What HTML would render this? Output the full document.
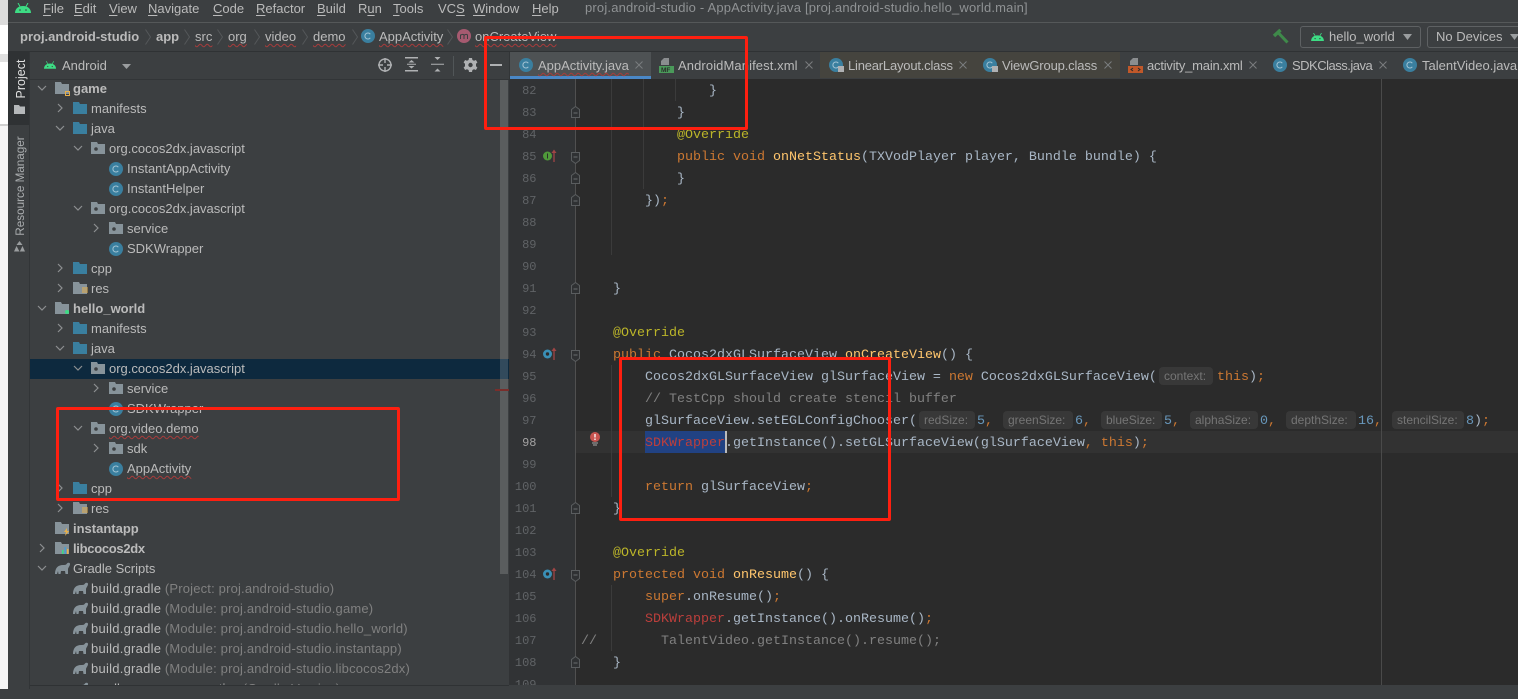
<!DOCTYPE html>
<html><head><meta charset="utf-8"><title>proj.android-studio</title>
<style>
html,body{margin:0;padding:0;width:1518px;height:689px;overflow:hidden;background:#3c3f41}
*{box-sizing:border-box}
.a{position:absolute}
.t{position:absolute;white-space:pre;font:13px/20px "Liberation Sans",sans-serif;color:#bbbbbb;margin-top:1px}
.b{font-weight:bold}
.g{color:#808080;letter-spacing:.18px}
.bg{letter-spacing:.25px}
.s{text-decoration:underline wavy #a83c3c 1px;text-underline-offset:2px;text-decoration-skip-ink:none}
.m .t{margin-top:0}
.m u{text-decoration:underline;text-underline-offset:2px}
.c{position:absolute;white-space:pre;font:13.33px/22px "Liberation Mono",monospace;color:#a9b7c6;margin-top:2px}
.k{color:#cc7832}.y{color:#ffc66d}.n{color:#6897bb}.an{color:#bbb529}.cm{color:#808080}.e{color:#bc3f3c}
.ln{position:absolute;left:509px;width:27.5px;text-align:right;font:12px/22px "Liberation Mono",monospace;color:#606366;margin-top:1px}
.i{position:absolute;height:18px;background:#383838;border-radius:4px;color:#757575;font:12px/18px "Liberation Sans",sans-serif;padding-left:5px;white-space:pre}
svg.u{position:absolute;overflow:visible}
.r{position:absolute;border:3px solid #fe1f10;border-radius:2px;background:transparent}
.tab{position:absolute;top:52px;height:26px}
</style></head><body>
<svg width="0" height="0" style="position:absolute">
<defs>
<symbol id="and" viewBox="0 0 16 10"><path d="M0 10C0 6 3 3 8 3s8 3 8 7z" fill="#3ddc84"/><path d="M3 0l2 3.500M13 0l-2 3.500" stroke="#3ddc84" stroke-width="1"/><circle cx="5" cy="7" r=".8" fill="#3c3f41"/><circle cx="11" cy="7" r=".8" fill="#3c3f41"/></symbol>
<symbol id="fo" viewBox="0 0 14 12"><path d="M0 0h6l1 2h7v10H0z" fill="#3a7f9f"/></symbol>
<symbol id="pk" viewBox="0 0 14 12"><path d="M0 0h6l1 2h7v10H0z" fill="#87939a"/><circle cx="5" cy="7" r="1.800" fill="#3c3f41"/></symbol>
<symbol id="cl" viewBox="0 0 14 14"><circle cx="7" cy="7" r="7" fill="#3a7f9f"/><path d="M9.300 5.200A3 3 0 1 0 9.300 8.800" fill="none" stroke="#a3c4d4" stroke-width="1"/></symbol>
<symbol id="gr" viewBox="0 0 15 12"><path d="M0 12C0 6 3 3 8 3c2 0 3 0 4-1.500 1-1 3-1 3 .5 0 2-1.500 3-2 5v5h-2.500l-.5-3H6l-.5 3H3.500l-.5-3-1 3z" fill="#87939a"/></symbol>
<symbol id="dn" viewBox="0 0 10 6"><path d="M1 1l4 4 4-4" fill="none" stroke="#8c8f91" stroke-width="1.200"/></symbol>
<symbol id="rt" viewBox="0 0 6 10"><path d="M1 1l4 4-4 4" fill="none" stroke="#8c8f91" stroke-width="1.200"/></symbol>
<symbol id="fu" viewBox="0 0 9 12"><path d="M.5 11.500V3.500L4.500 .5l4 3v8z" fill="#2f3133" stroke="#5a5d5f"/><path d="M2.500 7h4" stroke="#6a6d6f"/></symbol>
<symbol id="fd" viewBox="0 0 9 12"><path d="M.5 .5h8v8l-4 3-4-3z" fill="#2f3133" stroke="#5a5d5f"/><path d="M2.500 5h4" stroke="#6a6d6f"/></symbol>
<symbol id="ch" viewBox="0 0 6 16"><path d="M.5 .5l5 7.500-5 7.500" fill="none" stroke="#55585a"/></symbol>
</defs></svg>

<!-- window left edge -->
<div class="a" style="left:0;top:0;width:8px;height:689px;background:#f5f5f5"></div>
<div class="a" style="left:0;top:0;width:8px;height:25px;background:#dcdcdc"></div>
<div class="a" style="left:0;top:25px;width:8px;height:29px;background:#fff"></div>
<div class="a" style="left:0;top:54px;width:8px;height:8px;background:#e0e0e0"></div>
<div class="a" style="left:0;top:62px;width:8px;height:62px;background:#fff"></div>
<div class="a" style="left:0;top:124px;width:8px;height:2px;background:#d0d0d0"></div>

<!-- bars -->
<div class="a" style="left:8px;top:0;width:1510px;height:23px;background:#3c3f41;border-bottom:1px solid #555859"></div>
<div class="a" style="left:8px;top:23px;width:1510px;height:29px;background:#3c3f41;border-bottom:1px solid #2f3234"></div>

<!-- menu -->
<svg class="u" style="left:15px;top:3px" width="16" height="10"><use href="#and"/></svg>
<div class="m">
<div class="t" style="left:43px;top:-1px"><u>F</u>ile</div>
<div class="t" style="left:74px;top:-1px"><u>E</u>dit</div>
<div class="t" style="left:109px;top:-1px"><u>V</u>iew</div>
<div class="t" style="left:148px;top:-1px"><u>N</u>avigate</div>
<div class="t" style="left:213px;top:-1px"><u>C</u>ode</div>
<div class="t" style="left:256px;top:-1px"><u>R</u>efactor</div>
<div class="t" style="left:317px;top:-1px"><u>B</u>uild</div>
<div class="t" style="left:358px;top:-1px">R<u>u</u>n</div>
<div class="t" style="left:393px;top:-1px"><u>T</u>ools</div>
<div class="t" style="left:438px;top:-1px">VC<u>S</u></div>
<div class="t" style="left:473px;top:-1px"><u>W</u>indow</div>
<div class="t" style="left:532px;top:-1px"><u>H</u>elp</div>
<div class="t" style="left:585px;top:-2px;color:#8f9294;letter-spacing:.18px">proj.android-studio - AppActivity.java [proj.android-studio.hello_world.main]</div>
</div>

<!-- nav bar -->
<div class="t b" style="left:20px;top:26px">proj.android-studio</div>
<svg class="u" style="left:145px;top:29px" width="6" height="16"><use href="#ch"/></svg>
<div class="t b" style="left:156px;top:26px">app</div>
<svg class="u" style="left:184px;top:29px" width="6" height="16"><use href="#ch"/></svg>
<div class="t s" style="left:195px;top:26px">src</div>
<svg class="u" style="left:217px;top:29px" width="6" height="16"><use href="#ch"/></svg>
<div class="t s" style="left:228px;top:26px">org</div>
<svg class="u" style="left:254px;top:29px" width="6" height="16"><use href="#ch"/></svg>
<div class="t s" style="left:265px;top:26px">video</div>
<svg class="u" style="left:302px;top:29px" width="6" height="16"><use href="#ch"/></svg>
<div class="t s" style="left:313px;top:26px">demo</div>
<svg class="u" style="left:352px;top:29px" width="6" height="16"><use href="#ch"/></svg>
<svg class="u" style="left:361px;top:29px" width="14" height="14"><use href="#cl"/></svg>
<div class="t s" style="left:379px;top:26px">AppActivity</div>
<svg class="u" style="left:447px;top:29px" width="6" height="16"><use href="#ch"/></svg>
<svg class="u" style="left:457px;top:29px" width="14" height="14"><circle cx="7" cy="7" r="7" fill="#a65a70"/><path d="M3.500 10V5.500M3.500 6.500c1-1.500 3.500-1.500 3.500 0V10M7 6.500c1-1.500 3.500-1.500 3.500 0V10" fill="none" stroke="#3c3f41" stroke-width="1"/></svg>
<div class="t s" style="left:475px;top:26px">onCreateView</div>

<!-- run toolbar -->
<svg class="u" style="left:1273px;top:29px" width="16" height="16" fill="none" stroke="#3f8a4a"><path d="M1 7L7.500 1" stroke-width="3.500"/><path d="M5 3.500L14.500 13.500" stroke-width="3"/></svg>
<div class="a" style="left:1300px;top:26px;width:121px;height:22px;border:1px solid #5e6163;border-radius:3px"></div>
<svg class="u" style="left:1311px;top:33px" width="13" height="8"><use href="#and"/></svg>
<div class="t" style="left:1329px;top:26px">hello_world</div>
<svg class="u" style="left:1403px;top:34px" width="9" height="6"><path d="M0 0h9L4.500 6z" fill="#9a9d9f"/></svg>
<div class="a" style="left:1427px;top:26px;width:100px;height:22px;border:1px solid #5e6163;border-radius:3px"></div>
<div class="t" style="left:1436px;top:26px">No Devices</div>
<svg class="u" style="left:1510px;top:34px" width="9" height="6"><path d="M0 0h9L4.500 6z" fill="#9a9d9f"/></svg>

<!-- left strip -->
<div class="a" style="left:8px;top:52px;width:22px;height:637px;background:#3c3f41;border-right:1px solid #323537"></div>
<div class="a" style="left:8px;top:52px;width:21px;height:73px;background:#2f3234"></div>
<div class="t" style="left:21px;top:79px;margin:0;transform:translate(-50%,-50%) rotate(-90deg);line-height:14px;font-size:12.5px;color:#e0e0e0">Project</div>
<svg class="u" style="left:14px;top:105px" width="11" height="9"><path d="M0 0h5l1 1.500h5V9H0z" fill="#b5b8ba"/></svg>
<div class="t" style="left:21px;top:186px;margin:0;transform:translate(-50%,-50%) rotate(-90deg);line-height:14px;font-size:11.7px;color:#a9acae">Resource Manager</div>
<svg class="u" style="left:14px;top:241px" width="11" height="11"><path d="M5.500 0l3 4h-6zM2.500 5l3 5.500H0zM8.500 5l2.500 5.500H5.800z" fill="#9a9d9f"/></svg>

<!-- project panel header -->
<div class="a" style="left:30px;top:52px;width:479px;height:28px;background:#3c3f41;border-bottom:1px solid #323537"></div>
<svg class="u" style="left:44px;top:61px" width="12" height="8"><use href="#and"/></svg>
<div class="t" style="left:62px;top:55px">Android</div>
<svg class="u" style="left:122px;top:64px" width="9" height="5"><path d="M0 0h9L4.500 5z" fill="#9a9d9f"/></svg>
<svg class="u" style="left:378px;top:58px" width="14" height="14" fill="none" stroke="#afb1b3" stroke-width="1.400"><circle cx="7" cy="7" r="6"/><path d="M7 0v5M7 9v5M0 7h5M9 7h5"/></svg>
<svg class="u" style="left:405px;top:57px" width="13" height="15" fill="#afb1b3"><path d="M0 0h13v1.500H0zM0 13h13v1.500H0zM3.500 5.500L6.500 3l3 2.500zM3.500 9l3 2.500L9.500 9zM2 6.800h9v1H2z"/></svg>
<svg class="u" style="left:431px;top:57px" width="13" height="15" fill="#afb1b3"><path d="M3.500 0l3 3 3-3zM3.500 14.500l3-3 3 3zM0 6.800h13v1H0z"/></svg>
<div class="a" style="left:453px;top:56px;width:1px;height:20px;background:#515658"></div>
<svg class="u" style="left:464px;top:58px" width="13" height="14"><path d="M5 0h3l.4 2 1.600.8 1.900-.8 1.500 2.500L12 5.800v2.400l1.400 1.300-1.500 2.500-1.900-.8-1.600.8L8 14H5l-.4-2-1.600-.8-1.900.8L-.4 9.500 1 8.200V5.800L-.4 4.500 1.100 2l1.900.8L4.600 2z" fill="#afb1b3"/><circle cx="6.500" cy="7" r="2.200" fill="#3c3f41"/></svg>
<div class="a" style="left:490px;top:64px;width:12px;height:2px;background:#afb1b3"></div>

<!-- tree -->
<div class="a" style="left:0;top:0;width:1518px;height:689px;clip-path:inset(80px 1009px 4px 30px)">
<div class="a" style="left:30px;top:359px;width:479px;height:20px;background:#0d293e"></div>
<div class="a" style="left:500px;top:80px;width:8px;height:494px;background:rgba(255,255,255,.155)"></div>
<div class="a" style="left:495px;top:389px;width:14px;height:2px;background:#7a2e2b"></div>

<svg class="u" style="left:37px;top:85px" width="10" height="6"><use href="#dn"/></svg>
<svg class="u" style="left:55px;top:82px" width="14" height="12"><path d="M0 0h6l1 2h7v10H0z" fill="#87939a"/></svg>
<div class="a" style="left:65px;top:91px;width:5px;height:5px;border:1px solid #e8b04a"></div>
<div class="t b" style="left:73px;top:78px">game</div>

<svg class="u" style="left:57px;top:103px" width="6" height="10"><use href="#rt"/></svg>
<svg class="u" style="left:73px;top:102px" width="14" height="12"><use href="#fo"/></svg>
<div class="t" style="left:91px;top:98px">manifests</div>

<svg class="u" style="left:55px;top:125px" width="10" height="6"><use href="#dn"/></svg>
<svg class="u" style="left:73px;top:122px" width="14" height="12"><use href="#fo"/></svg>
<div class="t" style="left:91px;top:118px">java</div>

<svg class="u" style="left:73px;top:145px" width="10" height="6"><use href="#dn"/></svg>
<svg class="u" style="left:91px;top:142px" width="14" height="12"><use href="#pk"/></svg>
<div class="t" style="left:109px;top:138px">org.cocos2dx.javascript</div>

<svg class="u" style="left:109px;top:162px" width="14" height="14"><use href="#cl"/></svg>
<div class="t" style="left:127px;top:158px">InstantAppActivity</div>
<svg class="u" style="left:109px;top:182px" width="14" height="14"><use href="#cl"/></svg>
<div class="t" style="left:127px;top:178px">InstantHelper</div>

<svg class="u" style="left:73px;top:205px" width="10" height="6"><use href="#dn"/></svg>
<svg class="u" style="left:91px;top:202px" width="14" height="12"><use href="#pk"/></svg>
<div class="t" style="left:109px;top:198px">org.cocos2dx.javascript</div>

<svg class="u" style="left:93px;top:223px" width="6" height="10"><use href="#rt"/></svg>
<svg class="u" style="left:109px;top:222px" width="14" height="12"><use href="#pk"/></svg>
<div class="t" style="left:127px;top:218px">service</div>
<svg class="u" style="left:109px;top:242px" width="14" height="14"><use href="#cl"/></svg>
<div class="t" style="left:127px;top:238px">SDKWrapper</div>

<svg class="u" style="left:57px;top:263px" width="6" height="10"><use href="#rt"/></svg>
<svg class="u" style="left:73px;top:262px" width="14" height="12"><use href="#fo"/></svg>
<div class="t" style="left:91px;top:258px">cpp</div>
<svg class="u" style="left:57px;top:283px" width="6" height="10"><use href="#rt"/></svg>
<svg class="u" style="left:73px;top:282px" width="14" height="12"><path d="M0 0h6l1 2h7v10H0z" fill="#87939a"/><path d="M9 6h6M9 8h6M9 10h6" stroke="#e8b04a"/></svg>
<div class="t" style="left:91px;top:278px">res</div>

<svg class="u" style="left:37px;top:305px" width="10" height="6"><use href="#dn"/></svg>
<svg class="u" style="left:55px;top:302px" width="14" height="12"><path d="M0 0h6l1 2h7v10H0z" fill="#87939a"/><circle cx="12" cy="10" r="2" fill="#3ddc84"/></svg>
<div class="t b" style="left:73px;top:298px">hello_world</div>

<svg class="u" style="left:57px;top:323px" width="6" height="10"><use href="#rt"/></svg>
<svg class="u" style="left:73px;top:322px" width="14" height="12"><use href="#fo"/></svg>
<div class="t" style="left:91px;top:318px">manifests</div>
<svg class="u" style="left:55px;top:345px" width="10" height="6"><use href="#dn"/></svg>
<svg class="u" style="left:73px;top:342px" width="14" height="12"><use href="#fo"/></svg>
<div class="t" style="left:91px;top:338px">java</div>

<svg class="u" style="left:73px;top:365px" width="10" height="6"><use href="#dn"/></svg>
<svg class="u" style="left:91px;top:362px" width="14" height="12"><use href="#pk"/></svg>
<div class="t" style="left:109px;top:358px">org.cocos2dx.javascript</div>
<svg class="u" style="left:93px;top:383px" width="6" height="10"><use href="#rt"/></svg>
<svg class="u" style="left:109px;top:382px" width="14" height="12"><use href="#pk"/></svg>
<div class="t" style="left:127px;top:378px">service</div>
<svg class="u" style="left:109px;top:402px" width="14" height="14"><use href="#cl"/></svg>
<div class="t" style="left:127px;top:398px">SDKWrapper</div>

<svg class="u" style="left:73px;top:425px" width="10" height="6"><use href="#dn"/></svg>
<svg class="u" style="left:91px;top:422px" width="14" height="12"><use href="#pk"/></svg>
<div class="t s" style="left:109px;top:418px">org.video.demo</div>
<svg class="u" style="left:93px;top:443px" width="6" height="10"><use href="#rt"/></svg>
<svg class="u" style="left:109px;top:442px" width="14" height="12"><use href="#pk"/></svg>
<div class="t" style="left:127px;top:438px">sdk</div>
<svg class="u" style="left:109px;top:462px" width="14" height="14"><use href="#cl"/></svg>
<div class="t s" style="left:127px;top:458px">AppActivity</div>

<svg class="u" style="left:57px;top:483px" width="6" height="10"><use href="#rt"/></svg>
<svg class="u" style="left:73px;top:482px" width="14" height="12"><use href="#fo"/></svg>
<div class="t" style="left:91px;top:478px">cpp</div>
<svg class="u" style="left:57px;top:503px" width="6" height="10"><use href="#rt"/></svg>
<svg class="u" style="left:73px;top:502px" width="14" height="12"><path d="M0 0h6l1 2h7v10H0z" fill="#87939a"/><path d="M9 6h6M9 8h6M9 10h6" stroke="#e8b04a"/></svg>
<div class="t" style="left:91px;top:498px">res</div>

<svg class="u" style="left:55px;top:522px" width="14" height="12"><path d="M0 0h6l1 2h7v10H0z" fill="#87939a"/><path d="M12 6l-3 4h2l-1 4 4-5h-2z" fill="#e8b04a"/></svg>
<div class="t b" style="left:73px;top:518px">instantapp</div>
<svg class="u" style="left:39px;top:543px" width="6" height="10"><use href="#rt"/></svg>
<svg class="u" style="left:55px;top:542px" width="14" height="12"><path d="M0 0h6l1 2h7v10H0z" fill="#87939a"/><path d="M7 12V8h1.500v4z" fill="#3ddc84"/><path d="M9.500 12V5H11v7z" fill="#4a9fd0"/><path d="M12 12V7h1.500v5z" fill="#e8b04a"/></svg>
<div class="t b" style="left:73px;top:538px;letter-spacing:-.3px">libcocos2dx</div>

<svg class="u" style="left:37px;top:565px" width="10" height="6"><use href="#dn"/></svg>
<svg class="u" style="left:55px;top:562px" width="15" height="12"><use href="#gr"/></svg>
<div class="t" style="left:73px;top:558px">Gradle Scripts</div>
<svg class="u" style="left:73px;top:582px" width="15" height="12"><use href="#gr"/></svg>
<div class="t" style="left:91px;top:578px"><span class="bg">build.gradle</span> <span class="g">(Project: proj.android-studio)</span></div>
<svg class="u" style="left:73px;top:602px" width="15" height="12"><use href="#gr"/></svg>
<div class="t" style="left:91px;top:598px"><span class="bg">build.gradle</span> <span class="g">(Module: proj.android-studio.game)</span></div>
<svg class="u" style="left:73px;top:622px" width="15" height="12"><use href="#gr"/></svg>
<div class="t" style="left:91px;top:618px"><span class="bg">build.gradle</span> <span class="g">(Module: proj.android-studio.hello_world)</span></div>
<svg class="u" style="left:73px;top:642px" width="15" height="12"><use href="#gr"/></svg>
<div class="t" style="left:91px;top:638px"><span class="bg">build.gradle</span> <span class="g">(Module: proj.android-studio.instantapp)</span></div>
<svg class="u" style="left:73px;top:662px" width="15" height="12"><use href="#gr"/></svg>
<div class="t" style="left:91px;top:658px"><span class="bg">build.gradle</span> <span class="g">(Module: proj.android-studio.libcocos2dx)</span></div>
<svg class="u" style="left:73px;top:682px" width="15" height="12"><use href="#gr"/></svg>
<div class="t" style="left:91px;top:678px">gradle-wrapper.properties <span class="g">(Gradle Version)</span></div>
</div>
<div class="a" style="left:30px;top:685px;width:479px;height:1px;background:#2f3234"></div>
<div class="a" style="left:30px;top:686px;width:1488px;height:3px;background:#3c3f41"></div>

<!-- tabs -->
<div class="a" style="left:509px;top:52px;width:1009px;height:27px;background:#3c3f41;border-left:1px solid #323537"></div>
<div class="tab" style="left:510px;width:141px;background:#4e5254"></div>
<div class="a" style="left:510px;top:76px;width:141px;height:3px;background:#4a88c7"></div>
<div class="tab" style="left:820px;width:300px;height:26px;background:#45443e"></div>

<svg class="u" style="left:519px;top:58px" width="14" height="14"><use href="#cl"/></svg>
<div class="t s" style="left:538px;top:55px">AppActivity.java</div>
<svg class="u" style="left:635px;top:61px" width="9" height="9" stroke="#7a7d7f" fill="none"><path d="M.5 .5l7 7M7.500 .5l-7 7"/></svg>

<svg class="u" style="left:659px;top:58px" width="15" height="15"><path d="M5 0h5v7H2V3z" fill="#8a8d8f"/><rect y="8" width="15" height="7" fill="#4a9a5a"/><text x="2" y="14" font-family="Liberation Sans" font-size="6.500" font-weight="bold" fill="#2b2b2b">MF</text></svg>
<div class="t" style="left:678px;top:55px;letter-spacing:.1px">AndroidManifest.xml</div>
<svg class="u" style="left:805px;top:61px" width="9" height="9" stroke="#7a7d7f" fill="none"><path d="M.5 .5l7 7M7.500 .5l-7 7"/></svg>

<svg class="u" style="left:829px;top:58px" width="14" height="14"><use href="#cl"/><rect x="9" y="8" width="6" height="6" fill="#afb1b3"/></svg>
<div class="t" style="left:848px;top:55px;letter-spacing:-.2px">LinearLayout.class</div>
<svg class="u" style="left:959px;top:61px" width="9" height="9" stroke="#7a7d7f" fill="none"><path d="M.5 .5l7 7M7.500 .5l-7 7"/></svg>

<svg class="u" style="left:983px;top:58px" width="14" height="14"><use href="#cl"/><rect x="9" y="8" width="6" height="6" fill="#afb1b3"/></svg>
<div class="t" style="left:1002px;top:55px;letter-spacing:-.15px">ViewGroup.class</div>
<svg class="u" style="left:1104px;top:61px" width="9" height="9" stroke="#7a7d7f" fill="none"><path d="M.5 .5l7 7M7.500 .5l-7 7"/></svg>

<svg class="u" style="left:1128px;top:58px" width="15" height="15"><path d="M5 0h5v7H2V3z" fill="#8a8d8f"/><rect y="8" width="15" height="7" fill="#c0582a"/><path d="M5 10l-2 1.500L5 13M10 10l2 1.500L10 13" stroke="#2b2b2b" fill="none"/></svg>
<div class="t" style="left:1147px;top:55px;letter-spacing:-.2px">activity_main.xml</div>
<svg class="u" style="left:1249px;top:61px" width="9" height="9" stroke="#7a7d7f" fill="none"><path d="M.5 .5l7 7M7.500 .5l-7 7"/></svg>

<svg class="u" style="left:1273px;top:58px" width="14" height="14"><use href="#cl"/></svg>
<div class="t" style="left:1292px;top:55px;letter-spacing:-.5px">SDKClass.java</div>
<svg class="u" style="left:1379px;top:61px" width="9" height="9" stroke="#7a7d7f" fill="none"><path d="M.5 .5l7 7M7.500 .5l-7 7"/></svg>

<svg class="u" style="left:1403px;top:58px" width="14" height="14"><use href="#cl"/></svg>
<div class="t" style="left:1422px;top:55px">TalentVideo.java</div>

<!-- editor -->
<div class="a" style="left:509px;top:79px;width:66px;height:606px;background:#313335"></div>
<div class="a" style="left:575px;top:79px;width:943px;height:606px;background:#2b2b2b"></div>
<div class="a" style="left:575px;top:431px;width:943px;height:22px;background:#323232"></div>
<div class="a" style="left:645px;top:431px;width:80px;height:22px;background:#214283"></div>
<div class="a" style="left:575px;top:79px;width:1px;height:606px;background:#505050"></div>
<div class="a" style="left:1381px;top:79px;width:1px;height:606px;background:#4a4a4a"></div>
<div class="a" style="left:611px;top:79px;width:1px;height:176px;background:#3b3b3b"></div>
<div class="a" style="left:643px;top:79px;width:1px;height:110px;background:#3b3b3b"></div>
<div class="a" style="left:675px;top:79px;width:1px;height:22px;background:#3b3b3b"></div>
<div class="a" style="left:611px;top:365px;width:1px;height:132px;background:#3b3b3b"></div>
<div class="a" style="left:611px;top:585px;width:1px;height:66px;background:#3b3b3b"></div>

<!-- line numbers -->
<div class="a" style="left:0;top:0;width:1518px;height:689px;clip-path:inset(79px 0 4px 0)">
<div class="ln" style="top:79px">82</div><div class="ln" style="top:101px">83</div><div class="ln" style="top:123px">84</div><div class="ln" style="top:145px">85</div><div class="ln" style="top:167px">86</div><div class="ln" style="top:189px">87</div><div class="ln" style="top:211px">88</div><div class="ln" style="top:233px">89</div><div class="ln" style="top:255px">90</div><div class="ln" style="top:277px">91</div><div class="ln" style="top:299px">92</div><div class="ln" style="top:321px">93</div><div class="ln" style="top:343px">94</div><div class="ln" style="top:365px">95</div><div class="ln" style="top:387px">96</div><div class="ln" style="top:409px">97</div><div class="ln" style="top:431px;color:#a4a3a3">98</div><div class="ln" style="top:453px">99</div><div class="ln" style="top:475px">100</div><div class="ln" style="top:497px">101</div><div class="ln" style="top:519px">102</div><div class="ln" style="top:541px">103</div><div class="ln" style="top:563px">104</div><div class="ln" style="top:585px">105</div><div class="ln" style="top:607px">106</div><div class="ln" style="top:629px">107</div><div class="ln" style="top:651px">108</div><div class="ln" style="top:673px">109</div>

<!-- gutter icons -->
<svg class="u" style="left:571px;top:106px" width="9" height="12"><use href="#fu"/></svg>
<svg class="u" style="left:571px;top:152px" width="9" height="12"><use href="#fd"/></svg>
<svg class="u" style="left:571px;top:172px" width="9" height="12"><use href="#fu"/></svg>
<svg class="u" style="left:571px;top:194px" width="9" height="12"><use href="#fu"/></svg>
<svg class="u" style="left:571px;top:282px" width="9" height="12"><use href="#fu"/></svg>
<svg class="u" style="left:571px;top:350px" width="9" height="12"><use href="#fd"/></svg>
<svg class="u" style="left:571px;top:502px" width="9" height="12"><use href="#fu"/></svg>
<svg class="u" style="left:571px;top:570px" width="9" height="12"><use href="#fd"/></svg>
<svg class="u" style="left:571px;top:656px" width="9" height="12"><use href="#fu"/></svg>

<svg class="u" style="left:543px;top:149px" width="14" height="13"><circle cx="4.500" cy="7" r="4.500" fill="#4f9a3a"/><path d="M4.500 4.500v5" stroke="#2b2b2b"/><path d="M11 13V3" stroke="#a04545" stroke-width="1.300"/><path d="M11 .5L8.500 4h5z" fill="#a04545"/></svg>
<svg class="u" style="left:543px;top:347px" width="14" height="13"><circle cx="4.500" cy="7" r="4.500" fill="#3a8fb5"/><circle cx="4.500" cy="7" r="1.700" fill="#2b2b2b"/><path d="M11 13V3" stroke="#a04545" stroke-width="1.300"/><path d="M11 .5L8.500 4h5z" fill="#a04545"/></svg>
<svg class="u" style="left:543px;top:567px" width="14" height="13"><circle cx="4.500" cy="7" r="4.500" fill="#3a8fb5"/><circle cx="4.500" cy="7" r="1.700" fill="#2b2b2b"/><path d="M11 13V3" stroke="#a04545" stroke-width="1.300"/><path d="M11 .5L8.500 4h5z" fill="#a04545"/></svg>
<svg class="u" style="left:589px;top:432px" width="12" height="14"><circle cx="6" cy="5" r="5" fill="#c75450"/><path d="M6 2v3.500M6 6.500v1.500" stroke="#fff" stroke-width="1.300"/><path d="M3 11h6M4 13h4" stroke="#a8a8a8"/></svg>

<!-- code -->
<div class="c" style="left:709px;top:79px">}</div>
<div class="c" style="left:677px;top:101px">}</div>
<div class="c an" style="left:677px;top:123px">@Override</div>
<div class="c" style="left:677px;top:145px"><span class="k">public void</span> <span class="y">onNetStatus</span>(TXVodPlayer player, Bundle bundle) {</div>
<div class="c" style="left:677px;top:167px">}</div>
<div class="c" style="left:645px;top:189px">})<span class="k">;</span></div>
<div class="c" style="left:613px;top:277px">}</div>
<div class="c an" style="left:613px;top:321px">@Override</div>
<div class="c" style="left:613px;top:343px"><span class="k">public</span> Cocos2dxGLSurfaceView <span class="y">onCreateView</span>() {</div>
<div class="c" style="left:645px;top:365px">Cocos2dxGLSurfaceView glSurfaceView = <span class="k">new</span> Cocos2dxGLSurfaceView(</div>
<div class="i" style="left:1159px;top:367px;width:54px">context:</div>
<div class="c" style="left:1217px;top:365px"><span class="k">this</span>)<span class="k">;</span></div>
<div class="c cm" style="left:645px;top:387px">// TestCpp should create stencil buffer</div>
<div class="c" style="left:645px;top:409px">glSurfaceView.setEGLConfigChooser(</div>
<div class="i" style="left:919px;top:411px;width:56px">redSize:</div>
<div class="c" style="left:977px;top:409px"><span class="n">5</span><span class="k">,</span></div>
<div class="i" style="left:1003px;top:411px;width:70px">greenSize:</div>
<div class="c" style="left:1075px;top:409px"><span class="n">6</span><span class="k">,</span></div>
<div class="i" style="left:1101px;top:411px;width:61px">blueSize:</div>
<div class="c" style="left:1164px;top:409px"><span class="n">5</span><span class="k">,</span></div>
<div class="i" style="left:1190px;top:411px;width:68px">alphaSize:</div>
<div class="c" style="left:1260px;top:409px"><span class="n">0</span><span class="k">,</span></div>
<div class="i" style="left:1286px;top:411px;width:70px">depthSize:</div>
<div class="c" style="left:1358px;top:409px"><span class="n">16</span><span class="k">,</span></div>
<div class="i" style="left:1392px;top:411px;width:72px">stencilSize:</div>
<div class="c" style="left:1466px;top:409px"><span class="n">8</span>)<span class="k">;</span></div>
<div class="c" style="left:645px;top:431px"><span class="e">SDKWrapper</span>.getInstance().setGLSurfaceView(glSurfaceView<span class="k">,</span> <span class="k">this</span>)<span class="k">;</span></div>
<div class="a" style="left:725px;top:431px;width:2px;height:22px;background:#bbbbbb"></div>
<div class="c" style="left:645px;top:475px"><span class="k">return</span> glSurfaceView<span class="k">;</span></div>
<div class="c" style="left:613px;top:497px">}</div>
<div class="c an" style="left:613px;top:541px">@Override</div>
<div class="c" style="left:613px;top:563px"><span class="k">protected void</span> <span class="y">onResume</span>() {</div>
<div class="c" style="left:645px;top:585px"><span class="k">super</span>.onResume()<span class="k">;</span></div>
<div class="c" style="left:645px;top:607px"><span class="e">SDKWrapper</span>.getInstance().onResume()<span class="k">;</span></div>
<div class="c cm" style="left:581px;top:629px">//</div>
<div class="c cm" style="left:661px;top:629px">TalentVideo.getInstance().resume();</div>
<div class="c" style="left:613px;top:651px">}</div>
</div>

<!-- red annotation boxes -->
<div class="r" style="left:484px;top:36px;width:264px;height:94px"></div>
<div class="r" style="left:56px;top:407px;width:344px;height:94px"></div>
<div class="r" style="left:619px;top:357px;width:272px;height:164px"></div>
</body></html>
